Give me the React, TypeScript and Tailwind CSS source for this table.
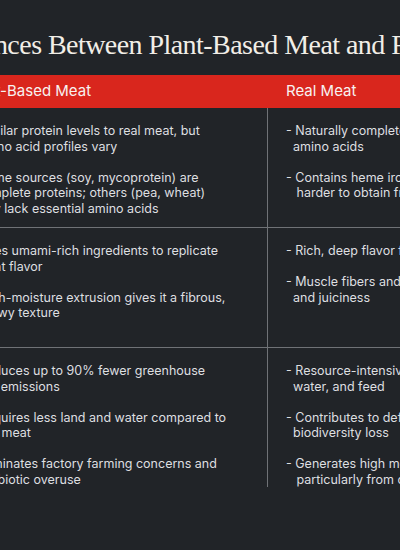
import React from "react";

type Row = { plant: string[]; real: string[]; height: string };

const rows: Row[] = [
  {
    height: "h-[120px] border-b border-[#6f7276]",
    plant: [
      "Similar protein levels to real meat, but amino acid profiles vary",
      "Some sources (soy, mycoprotein) are complete proteins; others (pea, wheat) may lack essential amino acids",
    ],
    real: [
      "Naturally complete protein with all essential\namino acids",
      "Contains heme iron and vitamin B12, which are\n\u00a0harder to obtain from plants",
    ],
  },
  {
    height: "h-[120px] border-b border-[#6f7276]",
    plant: [
      "Uses umami-rich ingredients to replicate meat flavor",
      "High-moisture extrusion gives it a fibrous, chewy texture",
    ],
    real: [
      "Rich, deep flavor from natural fats and proteins",
      "Muscle fibers and fat marbling provide tenderness\nand juiciness",
    ],
  },
  {
    height: "h-[105px]",
    plant: [
      "Reduces up to 90% fewer greenhouse gas emissions",
      "Requires less land and water compared to real meat",
      "Eliminates factory farming concerns and antibiotic overuse",
    ],
    real: [
      "Resource-intensive, requiring large amounts of land,\nwater, and feed",
      "Contributes to deforestation, habitat destruction, and\nbiodiversity loss",
      "Generates high methane emissions,\n\u00a0particularly from cattle",
    ],
  },
];

const Bullets = ({ items, wrap }: { items: string[]; wrap: string }) => (
  <ul className={`flex flex-col gap-[15.5px] ${wrap}`}>
    {items.map((t) => (
      <li key={t} className="pl-[7px] -indent-[7px]">
        - {t}
      </li>
    ))}
  </ul>
);

export default function App() {
  return (
    <div className="w-[400px] h-[550px] overflow-hidden bg-[#212428] font-['Inter',sans-serif]">
      <div className="-ml-[54px] w-[760px]">
        <h1 className="-ml-[80px] pt-[31px] mb-[16px] whitespace-nowrap font-['Liberation_Serif',serif] text-[28px] leading-[28px] tracking-[-0.55px] text-[#f1eee7]">
          Key Differences Between Plant-Based Meat and Real Meat
        </h1>

        <div className="grid grid-cols-[321px_1fr] h-[33px] items-center bg-[#d9261d] text-[15px] text-[#f7f2f1]">
          <div className="pl-[19px]">Plant-Based Meat</div>
          <div className="pl-[19px]">Real Meat</div>
        </div>

        {rows.map((r, i) => (
          <div key={i} className={`grid grid-cols-[321px_1fr] text-[12.5px] leading-[15.5px] text-[#dedfe0] ${r.height}`}>
            <div className="pl-[23px] pt-[15px]">
              <Bullets items={r.plant} wrap="w-[258px]" />
            </div>
            <div className="border-l border-[#6f7276] pl-[18px] pt-[15px]">
              <Bullets items={r.real} wrap="w-[400px] whitespace-pre-line" />
            </div>
          </div>
        ))}
      </div>
    </div>
  );
}
